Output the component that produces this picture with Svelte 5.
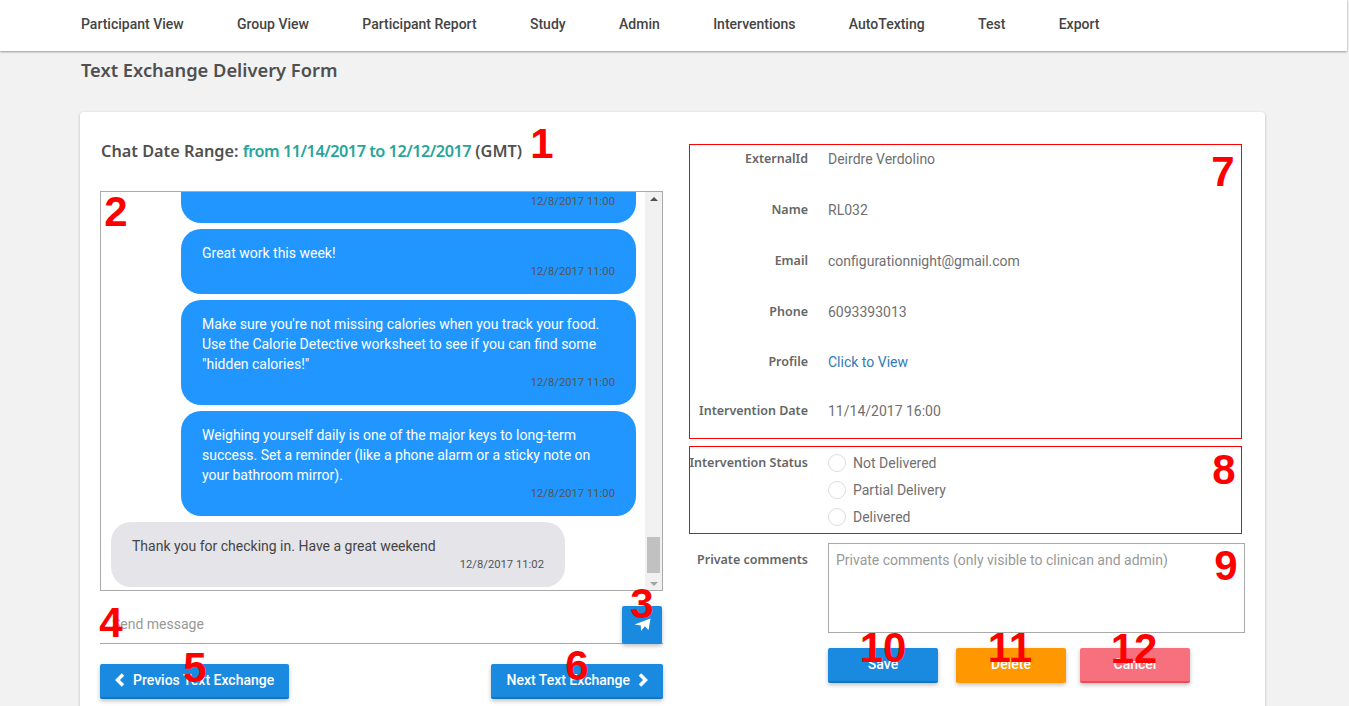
<script>
  const nav = ['Participant View', 'Group View', 'Participant Report', 'Study', 'Admin', 'Interventions', 'AutoTexting', 'Test', 'Export'];

  const messages = [
    { text: '', time: '12/8/2017 11:00', cut: true },
    { text: 'Great work this week!', time: '12/8/2017 11:00' },
    { text: 'Make sure you\'re not missing calories when you track your food. Use the Calorie Detective worksheet to see if you can find some "hidden calories!"', time: '12/8/2017 11:00' },
    { text: 'Weighing yourself daily is one of the major keys to long-term success. Set a reminder (like a phone alarm or a sticky note on your bathroom mirror).', time: '12/8/2017 11:00' },
    { text: 'Thank you for checking in. Have a great weekend', time: '12/8/2017 11:02', incoming: true }
  ];

  const details = [
    { label: 'ExternalId', value: 'Deirdre Verdolino' },
    { label: 'Name', value: 'RL032' },
    { label: 'Email', value: 'configurationnight@gmail.com' },
    { label: 'Phone', value: '6093393013' },
    { label: 'Profile', value: 'Click to View', link: true },
    { label: 'Intervention Date', value: '11/14/2017 16:00' }
  ];

  const statuses = ['Not Delivered', 'Partial Delivery', 'Delivered'];

  const marks = [
    ['1', 542, 144], ['2', 116, 212], ['3', 642, 604], ['4', 111, 623],
    ['5', 195, 668], ['6', 577, 666], ['7', 1223, 172], ['8', 1224, 470],
    ['9', 1226, 566], ['10', 883, 648], ['11', 1010, 648], ['12', 1134, 649]
  ];
</script>

<div class="page">
  <nav>
    {#each nav as item}
      <span>{item}</span>
    {/each}
  </nav>

  <h1>Text Exchange Delivery Form</h1>

  <section class="card">
    <div class="left">
      <h2>Chat Date Range: <em>from 11/14/2017 to 12/12/2017</em> (GMT)</h2>

      <div class="chat">
        <div class="messages">
          {#each messages as m}
            <div class="bubble" class:incoming={m.incoming} class:cut={m.cut}>
              {#if m.text}<p>{m.text}</p>{/if}
              <time>{m.time}</time>
            </div>
          {/each}
        </div>
        <div class="scrollbar">
          <i class="up"></i>
          <b></b>
          <i class="down"></i>
        </div>
      </div>

      <div class="send">
        <input placeholder="Send message" />
        <button type="button" aria-label="Send">
          <svg width="17" height="14" viewBox="0 0 17 14">
            <path d="M0.5 6.5 16.5 0.5 14.5 12 10.8 8.2 7 13 6.8 7.4Z" fill="#fff" />
          </svg>
        </button>
      </div>

      <div class="pager">
        <button class="btn" type="button">
          <svg width="10" height="14" viewBox="0 0 10 14"><path d="M8 1.5 2.5 7 8 12.5" /></svg>
          Previos Text Exchange
        </button>
        <button class="btn" type="button">
          Next Text Exchange
          <svg width="10" height="14" viewBox="0 0 10 14"><path d="M2 1.5 7.5 7 2 12.5" /></svg>
        </button>
      </div>
    </div>

    <div class="right">
      <div class="details">
        {#each details as d}
          <div class="row">
            <label>{d.label}</label>
            {#if d.link}
              <a href="#profile">{d.value}</a>
            {:else}
              <span>{d.value}</span>
            {/if}
          </div>
        {/each}
      </div>

      <div class="status">
        <label>Intervention Status</label>
        <div class="radios">
          {#each statuses as s}
            <div class="radio"><i></i>{s}</div>
          {/each}
        </div>
      </div>

      <div class="comments">
        <label>Private comments</label>
        <textarea placeholder="Private comments (only visible to clinican and admin)"></textarea>
      </div>

      <div class="actions">
        <button class="btn save" type="button">Save</button>
        <button class="btn delete" type="button">Delete</button>
        <button class="btn cancel" type="button">Cancel</button>
      </div>
    </div>
  </section>

  <div class="box seven"></div>
  <div class="box eight"></div>
  {#each marks as [n, x, y]}
    <span class="mark" style="left: {x}px; top: {y}px">{n}</span>
  {/each}
</div>

<style>
  :global(body) {
    background: #f2f2f2;
    overflow: hidden;
  }

  .page {
    color: #555;
    font-family: Roboto, sans-serif;
    font-size: 14px;
    height: 706px;
    overflow: hidden;
    position: relative;
  }

  nav {
    background: #fff;
    box-shadow: 0 1px 2px #00000060;
    box-sizing: border-box;
    color: #444;
    display: flex;
    font-weight: 500;
    gap: 53.4px;
    height: 51px;
    align-items: center;
    padding: 0 0 4px 81px;
    width: 1347px;
  }

  h1 {
    color: #505050;
    font-family: "Noto Sans", sans-serif;
    font-size: 18.3px;
    font-weight: 600;
    line-height: 24px;
    margin: 7px 0 30px 81px;
  }

  .card {
    background: #fff;
    border-radius: 4px;
    box-shadow: 0 1px 3px #00000040;
    box-sizing: border-box;
    display: grid;
    gap: 26px;
    grid-template-columns: 563px 1fr;
    height: 640px;
    margin-left: 80px;
    padding: 0 20px;
    width: 1185px;
  }

  h2 {
    color: #505050;
    font-family: "Noto Sans", sans-serif;
    font-size: 16.3px;
    font-weight: 600;
    line-height: 22px;
    margin: 28px 0 29px 1px;
  }

  h2 em {
    color: #26a69a;
    font-style: normal;
    letter-spacing: -0.5px;
  }

  .chat {
    border: 1px solid #aaa;
    box-sizing: border-box;
    display: flex;
    height: 400px;
    overflow: hidden;
  }

  .messages {
    display: flex;
    flex: 1;
    flex-direction: column;
    gap: 6px;
    padding: 0 9px 0 10px;
  }

  .bubble {
    align-self: flex-end;
    background: #2196ff;
    border-radius: 20px;
    box-sizing: border-box;
    color: #fff;
    padding: 14px 21px 14px;
    width: 455px;
  }

  .bubble.cut {
    border-radius: 0 0 20px 20px;
    height: 31px;
    padding-top: 1px;
  }

  .bubble.incoming {
    align-self: flex-start;
    background: #e4e4e9;
    color: #444;
    width: 454px;
  }

  .bubble p {
    line-height: 20px;
    margin: 0;
  }

  time {
    color: #555;
    display: block;
    font-size: 11.25px;
    line-height: 16px;
    margin-top: 1px;
    text-align: right;
  }

  .scrollbar {
    background: #f1f1f1;
    display: flex;
    flex-direction: column;
    align-items: center;
    justify-content: space-between;
    padding: 5px 0 4px;
    position: relative;
    width: 17px;
  }

  .scrollbar b {
    background: #c1c1c1;
    bottom: 17px;
    height: 36px;
    left: 2px;
    position: absolute;
    width: 13px;
  }

  .scrollbar i {
    border-left: 4px solid transparent;
    border-right: 4px solid transparent;
    height: 0;
    width: 0;
  }

  .scrollbar .up {
    border-bottom: 4px solid #505050;
  }

  .scrollbar .down {
    border-top: 4px solid #a3a3a3;
  }

  .send {
    align-items: flex-end;
    border-bottom: 1px solid #aaa;
    box-sizing: border-box;
    display: flex;
    height: 53px;
    padding-right: 1px;
  }

  .send input {
    border: none;
    color: #555;
    flex: 1;
    font-family: Roboto, sans-serif;
    font-size: 14px;
    height: 38px;
    outline: none;
    padding: 0 12px;
  }

  ::placeholder {
    color: #999;
    opacity: 1;
  }

  .send button {
    align-items: center;
    background: #1a8ae0;
    border: none;
    border-radius: 2px;
    box-shadow: 0 2px 4px #00000040;
    display: flex;
    height: 38px;
    justify-content: center;
    margin-bottom: -1px;
    padding: 0;
    width: 40px;
  }

  .pager {
    display: flex;
    justify-content: space-between;
    margin-top: 20px;
  }

  .btn {
    align-items: center;
    background: #1a8ae0;
    border: none;
    border-bottom: 2px solid #1475c4;
    border-radius: 2px;
    box-shadow: 0 2px 4px #00000040;
    box-sizing: border-box;
    color: #fff;
    display: flex;
    font-family: Roboto, sans-serif;
    font-size: 14px;
    font-weight: 500;
    gap: 8px;
    height: 35px;
    justify-content: center;
    padding: 0 15px 1px;
  }

  .btn svg path {
    fill: none;
    stroke: #fff;
    stroke-width: 3.5px;
  }

  .right {
    padding-top: 32px;
  }

  .details {
    height: 295px;
  }

  .row {
    display: grid;
    grid-template-columns: 119px 1fr;
    gap: 20px;
    height: 51px;
    line-height: 30px;
  }

  .row:nth-child(4) {
    height: 50px;
  }

  .row:nth-child(5) {
    height: 49px;
  }

  label {
    color: #666;
    font-family: "Noto Sans", sans-serif;
    font-size: 12.5px;
    font-weight: 600;
    text-align: right;
    white-space: nowrap;
  }

  .row span {
    color: #707070;
  }

  a {
    color: #337ab7;
    text-decoration: none;
  }

  .status {
    display: grid;
    grid-template-columns: 119px 1fr;
    gap: 20px;
    height: 88px;
    margin-top: 7px;
    padding-top: 3px;
    box-sizing: border-box;
  }

  .status label {
    line-height: 27px;
  }

  .radio {
    align-items: center;
    color: #707070;
    display: flex;
    gap: 7px;
    height: 27px;
  }

  .radio i {
    border: 1px solid #ddd;
    border-radius: 50%;
    box-sizing: border-box;
    height: 18px;
    width: 18px;
  }

  .comments {
    display: grid;
    grid-template-columns: 119px 1fr;
    gap: 20px;
    margin-top: 9px;
  }

  .comments label {
    line-height: 34px;
  }

  textarea {
    border: 1px solid #aaa;
    box-sizing: border-box;
    display: block;
    font-family: Roboto, sans-serif;
    font-size: 14px;
    height: 90px;
    line-height: 20px;
    outline: none;
    padding: 6px 7px;
    resize: none;
    width: 417px;
  }

  .actions {
    display: flex;
    margin: 15px 0 0 139px;
  }

  .actions .btn {
    width: 110px;
  }

  .save {
    margin-right: 18px;
  }

  .delete {
    background: #ff9800;
    border-bottom-color: #ff9800;
    margin-right: 14px;
  }

  .cancel {
    background: #f7707d;
    border-bottom-color: #ee4a5a;
  }

  .box {
    border: 1px solid #f00;
    box-sizing: border-box;
    left: 689px;
    position: absolute;
    width: 553px;
  }

  .seven {
    height: 295px;
    top: 144px;
  }

  .eight {
    height: 88px;
    top: 446px;
  }

  .mark {
    color: #f00;
    font-family: "Liberation Sans", sans-serif;
    font-size: 42px;
    font-weight: 700;
    line-height: 1;
    position: absolute;
    transform: translate(-50%, -50%);
  }
</style>
